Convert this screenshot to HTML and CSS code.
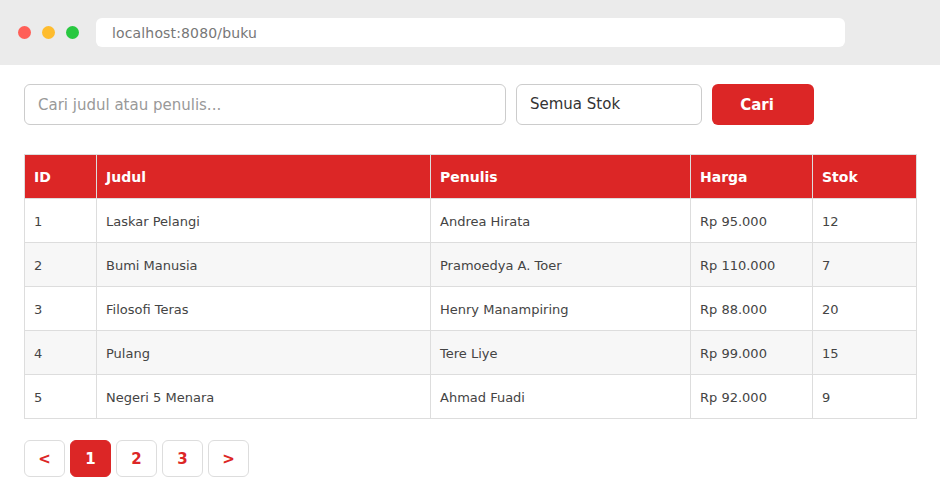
FILE: index.html
```html
<!DOCTYPE html>
<html lang="id">
<head>
    <meta charset="UTF-8">
    <meta name="viewport" content="width=device-width, initial-scale=1.0">
    <title>Daftar Buku</title>
    <link rel="stylesheet" href="styles.css">
</head>
<body>
    <div class="browser-bar">
        <span class="dot red"></span>
        <span class="dot yellow"></span>
        <span class="dot green"></span>
        <div class="url">localhost:8080/buku</div>
    </div>

    <div class="content">
        <form class="search-row" onsubmit="return false">
            <input type="text" class="search-input" placeholder="Cari judul atau penulis...">
            <div class="stock-select">Semua Stok</div>
            <button class="btn-search">Cari</button>
        </form>

        <table class="book-table">
            <thead>
                <tr>
                    <th class="col-id">ID</th>
                    <th class="col-judul">Judul</th>
                    <th class="col-penulis">Penulis</th>
                    <th class="col-harga">Harga</th>
                    <th>Stok</th>
                </tr>
            </thead>
            <tbody>
                <tr><td>1</td><td>Laskar Pelangi</td><td>Andrea Hirata</td><td>Rp 95.000</td><td>12</td></tr>
                <tr><td>2</td><td>Bumi Manusia</td><td>Pramoedya A. Toer</td><td>Rp 110.000</td><td>7</td></tr>
                <tr><td>3</td><td>Filosofi Teras</td><td>Henry Manampiring</td><td>Rp 88.000</td><td>20</td></tr>
                <tr><td>4</td><td>Pulang</td><td>Tere Liye</td><td>Rp 99.000</td><td>15</td></tr>
                <tr><td>5</td><td>Negeri 5 Menara</td><td>Ahmad Fuadi</td><td>Rp 92.000</td><td>9</td></tr>
            </tbody>
        </table>

        <div class="pagination">
            <a class="page">&lt;</a>
            <a class="page active">1</a>
            <a class="page">2</a>
            <a class="page">3</a>
            <a class="page">&gt;</a>
        </div>
    </div>
</body>
</html>
```

FILE: styles.css
```css
* {
    box-sizing: border-box;
}
body {
    margin: 0;
    font-family: "DejaVu Sans", sans-serif;
    background: #fff;
    color: #333;
}

/* barra navegador */
.browser-bar {
    height: 65px;
    background: #ebebeb;
    display: flex;
    align-items: center;
    padding: 0 0 0 18px;
}
.dot {
    width: 13px;
    height: 13px;
    border-radius: 50%;
    margin-right: 11px;
    display: inline-block;
}
.dot.red { background: #ff5f57; }
.dot.yellow { background: #febc2e; }
.dot.green { background: #28c840; }
.url {
    margin-left: 6px;
    width: 749px;
    height: 29px;
    background: #fff;
    border-radius: 6px;
    padding: 0 16px;
    font-size: 14px;
    letter-spacing: 0.15px;
    line-height: 30px;
    color: #777;
}

.content {
    padding: 19px 24px 0 24px;
}

/* busqueda */
.search-row {
    display: flex;
    gap: 10px;
    margin: 0 0 29px 0;
}
.search-input, .stock-select {
    height: 41px;
    border: 1px solid #ccc;
    border-radius: 6px;
    padding: 0 13px;
    font-family: inherit;
    font-size: 15px;
    color: #333;
    background: #fff;
}
.search-input { width: 482px; }
.search-input::placeholder { color: #999; }
.stock-select {
    width: 186px;
    line-height: 39px;
}
.btn-search {
    width: 102px;
    height: 41px;
    border: none;
    border-radius: 6px;
    padding: 0 12px 0 0;
    background: #dc2626;
    color: #fff;
    font-family: inherit;
    font-size: 15px;
    font-weight: bold;
    cursor: pointer;
}

/* tabla */
.book-table {
    width: 893px;
    border-collapse: collapse;
    font-size: 13px;
    color: #444;
}
.book-table th, .book-table td {
    border: 1px solid #ddd;
    text-align: left;
    padding: 1px 9px 0 9px;
    height: 44px;
}
.book-table th {
    background: #dc2626;
    color: #fff;
    font-size: 14px;
    font-weight: bold;
}
.book-table tbody tr:nth-child(even) { background: #f7f7f7; }
.col-id { width: 72px; }
.col-judul { width: 334px; }
.col-penulis { width: 260px; }
.col-harga { width: 122px; }

/* paginacion */
.pagination {
    display: flex;
    gap: 5px;
    margin-top: 21px;
}
.page {
    width: 41px;
    height: 37px;
    border: 1px solid #ddd;
    border-radius: 6px;
    display: flex;
    align-items: center;
    justify-content: center;
    color: #dc2626;
    font-weight: bold;
    font-size: 15px;
    cursor: pointer;
}
.page.active {
    background: #dc2626;
    border-color: #dc2626;
    color: #fff;
}
```
